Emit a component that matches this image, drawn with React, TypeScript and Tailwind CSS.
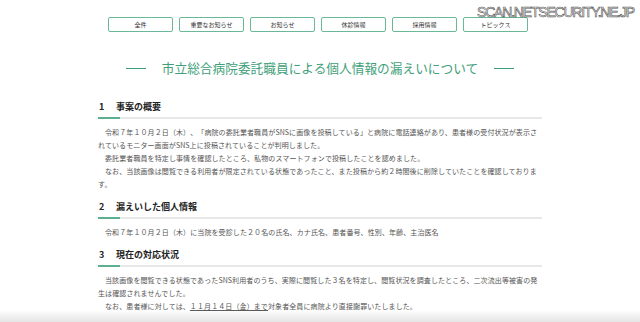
const jp = "font-['Noto_Sans_CJK_JP','Noto_Sans',sans-serif]";

const tabs = ['全件', '重要なお知らせ', 'お知らせ', '休診情報', '採用情報', 'トピックス'];

function SectionTitle({ num, title }: { num: string; title: string }) {
  return (
    <div>
      <h2 className="flex text-[9px] leading-[12px] font-bold text-[#222]">
        <span className="w-[18px] pl-[1px]">{num}</span>
        <span>{title}</span>
      </h2>
      <div className="mt-[4px] h-[2px] bg-[#e8e8e8] flex">
        <div className="w-[22px] bg-[#5cb08f]" />
      </div>
    </div>
  );
}

function Para({ children }: { children: React.ReactNode }) {
  return (
    <p className="indent-[7px] text-[7px] tracking-[0.1px] leading-[13px] text-[#555] [text-spacing-trim:space-all]">
      {children}
    </p>
  );
}

export default function App() {
  return (
    <div className={`relative w-[640px] h-[322px] overflow-hidden bg-white ${jp}`}>
      <div className="absolute right-[6px] top-[2px] font-['Liberation_Sans',Arial,sans-serif] text-[14px] tracking-[-1.2px] text-white [-webkit-text-stroke:0.6px_#555]">
        SCAN.NETSECURITY.NE.JP
      </div>

      <nav className="flex gap-[6px] pl-[108px] pt-[17px]">
        {tabs.map((t) => (
          <div
            key={t}
            className="w-[65px] h-[15px] flex items-center justify-center rounded-[2px] border border-[#6ab897] text-[6px] text-[#333]"
          >
            {t}
          </div>
        ))}
      </nav>

      <div className="mt-[26px] flex items-center justify-center gap-[16px] text-[12.7px] leading-[20px] text-[#3f9f7a]">
        <span className="w-[20px] h-[1px] bg-[#3f9f7a]" />
        <h1>市立総合病院委託職員による個人情報の漏えいについて</h1>
        <span className="w-[20px] h-[1px] bg-[#3f9f7a]" />
      </div>

      <main className="w-[444px] mx-auto mt-[23px]">
        <section>
          <SectionTitle num="1" title="事案の概要" />
          <div className="mt-[7px]">
            <Para>
              令和７年１０月２日（木）、「病院の委託業者職員がSNSに画像を投稿している」と病院に電話連絡があり、患者様の受付状況が表示されているモニター画面がSNS上に投稿されていることが判明しました。
            </Para>
            <Para>委託業者職員を特定し事情を確認したところ、私物のスマートフォンで投稿したことを認めました。</Para>
            <Para>
              なお、当該画像は閲覧できる利用者が限定されている状態であったこと、また投稿から約２時間後に削除していたことを確認しておりま
              <br />す。
            </Para>
          </div>
        </section>

        <section className="mt-[10px]">
          <SectionTitle num="2" title="漏えいした個人情報" />
          <div className="mt-[7px]">
            <Para>令和７年１０月２日（木）に当院を受診した２０名の氏名、カナ氏名、患者番号、性別、年齢、主治医名</Para>
          </div>
        </section>

        <section className="mt-[10px]">
          <SectionTitle num="3" title="現在の対応状況" />
          <div className="mt-[7px]">
            <Para>
              当該画像を閲覧できる状態であったSNS利用者のうち、実際に閲覧した３名を特定し、閲覧状況を調査したところ、二次流出等被害の発生は確認されませんでした。
            </Para>
            <Para>
              なお、患者様に対しては、<span className="underline underline-offset-[1px]">１１月１４日（金）まで</span>対象者全員に病院より直接謝罪いたしました。
            </Para>
          </div>
        </section>
      </main>

      <div className="pointer-events-none absolute inset-x-0 bottom-0 h-[12px] bg-gradient-to-b from-white/0 to-[#e4e4e4]" />
    </div>
  );
}
